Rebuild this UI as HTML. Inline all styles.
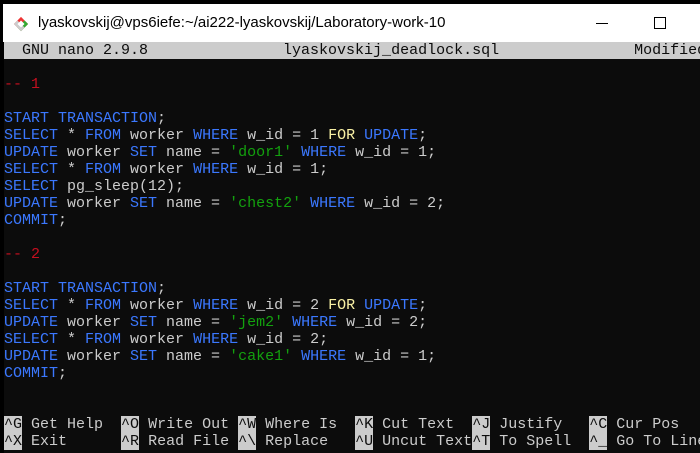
<!DOCTYPE html>
<html><head><meta charset="utf-8"><style>
body{margin:0;width:700px;height:453px;overflow:hidden;background:#000;position:relative;font-family:"Liberation Sans",sans-serif}
#title{position:absolute;left:3px;top:4px;width:697px;height:38px;background:#fff}
#title .t{position:absolute;left:35px;top:10px;font-size:15px;color:#000}
#term{position:absolute;left:4px;top:42px;right:0;bottom:0;background:#0c0c0c;overflow:hidden}
.r{position:absolute;left:0;height:17px;line-height:17px;font-family:"Liberation Mono",monospace;font-size:15px;color:#cccccc;white-space:pre}
.b{color:#3b78ff}.rd{color:#c50f1f}.y{color:#f9f1a5}.g{color:#13a10e}
.inv{background:#cccccc;color:#0c0c0c}
</style></head><body>
<div id="title">
<svg style="position:absolute;left:9px;top:11px" width="18" height="18" viewBox="0 0 18 18"><rect x="4" y="4" width="10" height="10" transform="rotate(45 9 9)" fill="#e33"/><rect x="9" y="4" width="5" height="10" transform="rotate(45 9 9)" fill="#3a3"/><rect x="4" y="9" width="10" height="5" transform="rotate(45 9 9)" fill="#ccc"/><rect x="6.5" y="6.5" width="5" height="5" transform="rotate(45 9 9)" fill="#fff"/></svg>
<div class="t">lyaskovskij@vps6iefe:~/ai222-lyaskovskij/Laboratory-work-10</div>
<div style="position:absolute;left:593px;top:19px;width:12px;height:1px;background:#000"></div>
<div style="position:absolute;left:651px;top:13px;width:10px;height:10px;border:1px solid #000"></div>
</div>
<div id="term">
<div class="r inv" style="top:0;width:696px">  GNU nano 2.9.8               lyaskovskij_deadlock.sql               Modified</div>
<div class="r rd" style="top:34px">-- 1</div>
<div class="r" style="top:68px"><span class="b">START TRANSACTION</span>;</div>
<div class="r" style="top:85px"><span class="b">SELECT</span> * <span class="b">FROM</span> worker <span class="b">WHERE</span> w_id = 1 <span class="y">FOR</span> <span class="b">UPDATE</span>;</div>
<div class="r" style="top:102px"><span class="b">UPDATE</span> worker <span class="b">SET</span> name = <span class="g">'door1'</span> <span class="b">WHERE</span> w_id = 1;</div>
<div class="r" style="top:119px"><span class="b">SELECT</span> * <span class="b">FROM</span> worker <span class="b">WHERE</span> w_id = 1;</div>
<div class="r" style="top:136px"><span class="b">SELECT</span> pg_sleep(12);</div>
<div class="r" style="top:153px"><span class="b">UPDATE</span> worker <span class="b">SET</span> name = <span class="g">'chest2'</span> <span class="b">WHERE</span> w_id = 2;</div>
<div class="r b" style="top:170px">COMMIT<span style="color:#ccc">;</span></div>
<div class="r rd" style="top:204px">-- 2</div>
<div class="r" style="top:238px"><span class="b">START TRANSACTION</span>;</div>
<div class="r" style="top:255px"><span class="b">SELECT</span> * <span class="b">FROM</span> worker <span class="b">WHERE</span> w_id = 2 <span class="y">FOR</span> <span class="b">UPDATE</span>;</div>
<div class="r" style="top:272px"><span class="b">UPDATE</span> worker <span class="b">SET</span> name = <span class="g">'jem2'</span> <span class="b">WHERE</span> w_id = 2;</div>
<div class="r" style="top:289px"><span class="b">SELECT</span> * <span class="b">FROM</span> worker <span class="b">WHERE</span> w_id = 2;</div>
<div class="r" style="top:306px"><span class="b">UPDATE</span> worker <span class="b">SET</span> name = <span class="g">'cake1'</span> <span class="b">WHERE</span> w_id = 1;</div>
<div class="r b" style="top:323px">COMMIT<span style="color:#ccc">;</span></div>
<div class="r" style="top:374px"><span class="inv">^G</span> Get Help  <span class="inv">^O</span> Write Out <span class="inv">^W</span> Where Is  <span class="inv">^K</span> Cut Text  <span class="inv">^J</span> Justify   <span class="inv">^C</span> Cur Pos</div>
<div class="r" style="top:391px"><span class="inv">^X</span> Exit      <span class="inv">^R</span> Read File <span class="inv">^\</span> Replace   <span class="inv">^U</span> Uncut Text<span class="inv">^T</span> To Spell  <span class="inv">^_</span> Go To Line</div>
</div>
</body></html>
